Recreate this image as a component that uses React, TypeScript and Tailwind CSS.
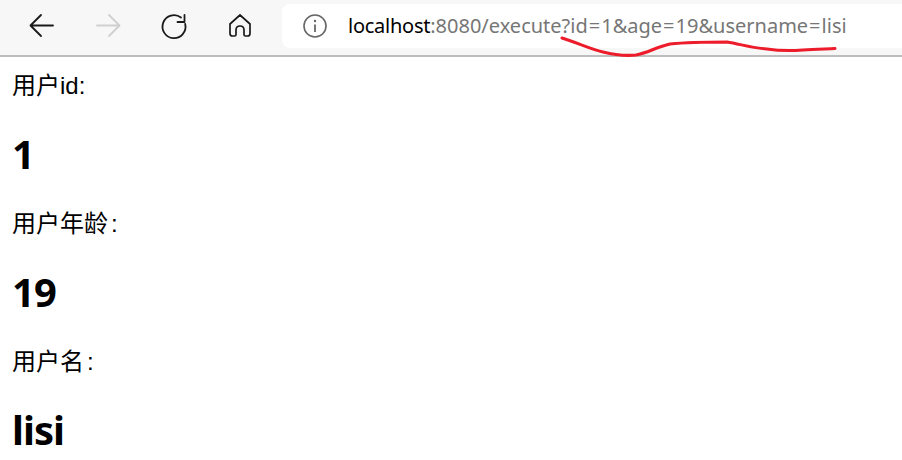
import React from "react";

const CJK = "font-['Liberation_Sans','Noto_Sans_CJK_SC',sans-serif]";
const Bold = "font-['Noto_Sans','Noto_Sans_CJK_SC',sans-serif] font-bold text-[40px] leading-[54px] tracking-[-1px] text-black";

function Label({ children }: { children: React.ReactNode }) {
  return <p className={`${CJK} text-[24px] leading-[32px] text-black h-[32px]`}>{children}</p>;
}

function Eq() {
  return <span className="px-px">=</span>;
}

function Toolbar() {
  return (
    <div className="relative flex h-[57px] border-b-2 border-[#bdbdbd] bg-[#f7f7f7]">
      <div className="flex w-[282px] shrink-0 items-center">
        <svg width="282" height="55" viewBox="0 0 282 55" fill="none" strokeLinecap="round" strokeLinejoin="round">
          <path d="M31 25.5H53M41 15L30.5 25.5L41 36" stroke="#1a1a1a" strokeWidth="1.8" />
          <path d="M97 25.5H119M109 15L119.5 25.5L109 36" stroke="#d0d0d0" strokeWidth="1.8" />
          <path d="M181 17.5A11.5 11.5 0 1 0 185.2 24M184.5 15V22H177.5" stroke="#1a1a1a" strokeWidth="1.8" />
          <path d="M230 24L240 15L250 24V33.5Q250 36 247.5 36H245.5Q244 36 244 34.5V30Q244 26 240 26Q236 26 236 30V34.5Q236 36 234.5 36H232.5Q230 36 230 33.5Z" stroke="#1a1a1a" strokeWidth="1.7" />
        </svg>
      </div>
      <div className="mt-1 flex h-[44px] flex-1 items-center rounded-l-lg bg-white pl-[21px]">
        <svg width="24" height="24" viewBox="0 0 24 24" fill="none" className="shrink-0">
          <circle cx="12" cy="12" r="11" stroke="#666666" strokeWidth="1.6" />
          <path d="M12 10.5V18" stroke="#666666" strokeWidth="1.8" />
          <circle cx="12" cy="7" r="1.2" fill="#666666" />
        </svg>
        <span className="ml-[21px] whitespace-nowrap font-['Noto_Sans',sans-serif] text-[20px] text-[#767676]">
          <span className="text-black tracking-[-0.25px]">localhost</span>:8080/execute?id<Eq />1&amp;age<Eq />19&amp;username<Eq />lisi
        </span>
      </div>
      <svg className="absolute left-[555px] top-[32px]" width="290" height="30" viewBox="555 32 290 30" fill="none">
        <path
          d="M562 38C578 43 590 49 603 52C615 55 626 56 636 55C648 53 656 47 670 44C690 42 710 42 727 42C740 44 752 48 767 49C780 51 790 51 803 50C815 49 825 49 835 48.5"
          stroke="#ed1c2b"
          strokeWidth="3"
          strokeLinecap="round"
        />
      </svg>
    </div>
  );
}

export default function App() {
  return (
    <div className="h-[460px] w-[902px] overflow-hidden bg-white">
      <Toolbar />
      <div className="flex flex-col pl-3 pt-[13px]">
        <Label>用户id:</Label>
        <h1 className={`${Bold} mt-[25px]`}>1</h1>
        <div className="mt-[27px]">
          <Label>用户年龄<span className="ml-[3px]">:</span></Label>
        </div>
        <h1 className={`${Bold} mt-[25px]`}>19</h1>
        <div className="mt-[27px]">
          <Label>用户名<span className="ml-[3px]">:</span></Label>
        </div>
        <h1 className={`${Bold} mt-[25px]`}>lisi</h1>
      </div>
    </div>
  );
}
